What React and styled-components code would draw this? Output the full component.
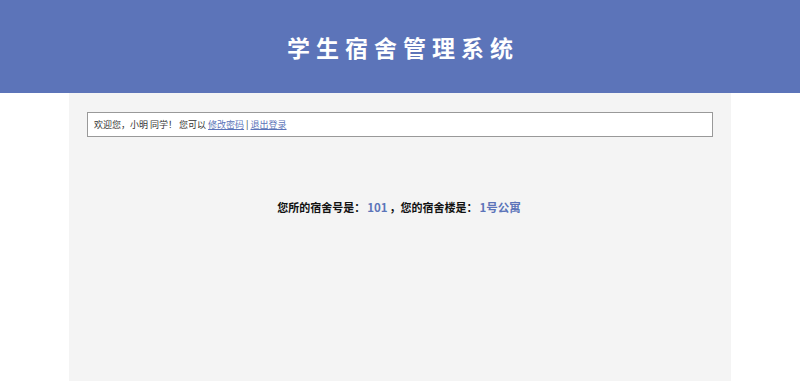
import React from "react";
import styled, { createGlobalStyle } from "styled-components";

const GlobalStyle = createGlobalStyle`
  html, body {
    margin: 0;
    padding: 0;
    background: #fff;
    font-family: "Microsoft YaHei", "Noto Sans CJK SC", "Liberation Sans", sans-serif;
  }
`;

const Header = styled.header`
  height: 93px;
  background: #5c74b9;
  display: flex;
  align-items: center;
  justify-content: center;
  h1 {
    margin: 0;
    color: #fff;
    font-size: 23px;
    font-weight: bold;
    letter-spacing: 6px;
    padding-left: 6px;
  }
`;

const Main = styled.main`
  width: 626px;
  min-height: 288px;
  margin: 0 auto;
  padding: 19px 18px 0;
  background: #f4f4f4;
`;

const Welcome = styled.div`
  background: #fff;
  border: 1px solid #999;
  height: 23px;
  display: flex;
  align-items: center;
  padding: 0 6px;
  font-size: 9px;
  color: #333;
  a {
    color: #5c74b9;
    text-decoration: underline;
  }
  .sep {
    margin: 0 2px;
  }
`;

const Info = styled.p`
  margin: 62px 0 0;
  text-align: center;
  font-size: 11px;
  font-weight: bold;
  color: #111;
  span {
    color: #5c74b9;
    padding: 0 2px;
    font-size: 11.5px;
  }
`;

const App = () => {
  return (
    <>
      <GlobalStyle />
      <Header>
        <h1>学生宿舍管理系统</h1>
      </Header>
      <Main>
        <Welcome>
          欢迎您，小明 同学！&nbsp;您可以&nbsp;<a href="#">修改密码</a>
          <span className="sep">|</span>
          <a href="#">退出登录</a>
        </Welcome>
        <Info>
          您所的宿舍号是：<span>101</span>，您的宿舍楼是：<span>1号公寓</span>
        </Info>
      </Main>
    </>
  );
};

export default App;
